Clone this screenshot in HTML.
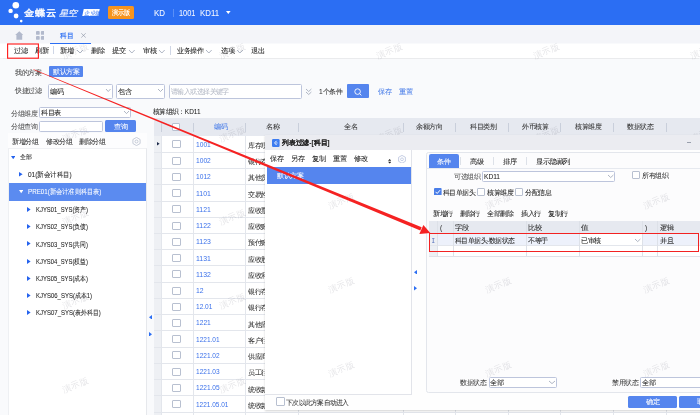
<!DOCTYPE html>
<html><head><meta charset="utf-8"><style>
html,body{margin:0;padding:0;width:700px;height:415px;overflow:hidden;background:#f8f9fb}
.t{-webkit-text-stroke:0.1px currentColor}
#root{position:absolute;left:0;top:0;width:700px;height:415px;overflow:hidden;will-change:transform}
body{position:relative;font-family:"Liberation Sans",sans-serif}
.r{position:absolute}
.t{position:absolute;white-space:nowrap}
</style></head><body><div id="root">
<div class="r" style="left:0.00px;top:0.00px;width:700.00px;height:415.00px;background:#f9fafc"></div>
<div class="r" style="left:0.00px;top:0.00px;width:700.00px;height:24.80px;background:#2b6ef3"></div>
<svg class="r" style="left:0;top:0" width="30" height="24"><circle cx="15.8" cy="5.2" r="3.3" fill="#fff"/><circle cx="10.6" cy="10.9" r="2.2" fill="#fff"/><circle cx="16.1" cy="16" r="2.4" fill="#fff"/><circle cx="21.2" cy="21.1" r="1.3" fill="#fff"/></svg>
<span id="t1" class="t" style="left:23.67px;top:6.51px;font-size:11px;line-height:11px;color:#fff;font-weight:normal;transform:scaleY(0.86);transform-origin:0 60%;-webkit-text-stroke:0.45px #fff">金蝶云</span>
<span id="t2" class="t" style="left:59.21px;top:7.50px;font-size:9.6px;line-height:9.6px;color:#eef3ff;font-weight:normal;transform:skewX(-12deg) scaleY(0.85);transform-origin:0 60%;-webkit-text-stroke:0.2px #eef3ff;letter-spacing:-0.4px">星空</span>
<div class="r" style="left:82.5px;top:9.2px;width:16px;height:6.8px;background:#fff;transform:skewX(-12deg)"></div>
<span class="t" style="left:84.2px;top:9.6px;font-size:11px;line-height:12px;color:#2b6ef3;font-style:italic;transform:scale(0.5);transform-origin:0 0;-webkit-text-stroke:0">企业版</span>
<div class="r" style="left:107.80px;top:6.30px;width:26.50px;height:12.30px;background:#f7941e;border-radius:1.5px"></div>
<span id="t3" class="t" style="left:111.79px;top:8.97px;font-size:14px;line-height:14px;color:#fff;font-weight:normal;transform:scale(0.4364,0.5);transform-origin:0 0;-webkit-text-stroke:0.25px #fff">演示版</span>
<span id="t4" class="t" style="left:154.45px;top:8.83px;font-size:16.6px;line-height:16.6px;color:#f4f7ff;font-weight:normal;transform:scale(0.4790,0.5);transform-origin:0 0;">KD</span>
<div class="r" style="left:173.30px;top:9.30px;width:0.80px;height:7.70px;background:#5a8ff7"></div>
<span id="t5" class="t" style="left:179.05px;top:8.83px;font-size:16.6px;line-height:16.6px;color:#f4f7ff;font-weight:normal;transform:scale(0.4455,0.5);transform-origin:0 0;">1001</span>
<span id="t6" class="t" style="left:199.75px;top:8.83px;font-size:16.6px;line-height:16.6px;color:#f4f7ff;font-weight:normal;transform:scale(0.4729,0.5);transform-origin:0 0;">KD11</span>
<svg class="r" style="left:226.2px;top:11.4px" width="5" height="3.2"><polygon points="0,0 4.6,0 2.3,3" fill="#fff"/></svg>
<div class="r" style="left:0.00px;top:24.80px;width:700.00px;height:18.70px;background:#f4f5f9"></div>
<svg class="r" style="left:14.8px;top:31.3px" width="8.6" height="8.8"><polygon points="4.3,0.2 8.4,4.0 7.2,4.0 7.2,8.8 1.4,8.8 1.4,4.0 0.2,4.0" fill="#b2b9cc"/></svg>
<svg class="r" style="left:35.7px;top:31.2px" width="8.6" height="8.8"><rect x="0" y="0" width="3.7" height="3.8" rx="0.9" fill="#b2b9cc"/><rect x="4.9" y="0" width="3.7" height="3.8" rx="0.9" fill="#b2b9cc"/><rect x="0" y="5.0" width="3.7" height="3.8" rx="0.9" fill="#b2b9cc"/><rect x="4.9" y="5.0" width="3.7" height="3.8" rx="0.9" fill="#b2b9cc"/></svg>
<span id="t7" class="t" style="left:60.08px;top:31.97px;font-size:14.4px;line-height:14.4px;color:#2b6ef3;font-weight:normal;transform:scale(0.4874,0.5);transform-origin:0 0;-webkit-text-stroke:0.3px #2b6ef3">科目</span>
<svg class="r" style="left:81px;top:33.3px" width="5" height="4.8"><path d="M0.3,0.3 L4.7,4.5 M4.7,0.3 L0.3,4.5" stroke="#858d9f" stroke-width="0.6"/></svg>
<div class="r" style="left:50.00px;top:42.60px;width:40.70px;height:1.40px;background:#2b6ef3"></div>
<div class="r" style="left:0.00px;top:44.00px;width:700.00px;height:13.50px;background:#fff;box-shadow:0 0.6px 1px rgba(0,0,0,0.06)"></div>
<span id="t8" class="t" style="left:14.10px;top:47.17px;font-size:13.2px;line-height:13.2px;color:#222;font-weight:normal;transform:scale(0.5152,0.5);transform-origin:0 0;">过滤</span>
<span id="t9" class="t" style="left:35.20px;top:47.17px;font-size:13.2px;line-height:13.2px;color:#222;font-weight:normal;transform:scale(0.5152,0.5);transform-origin:0 0;">刷新</span>
<div class="r" style="left:53.30px;top:46.30px;width:0.70px;height:7.70px;background:#cfd6e6"></div>
<span id="t10" class="t" style="left:59.80px;top:47.17px;font-size:13.2px;line-height:13.2px;color:#222;font-weight:normal;transform:scale(0.5152,0.5);transform-origin:0 0;">新增</span>
<svg class="r" style="left:77.00px;top:49.50px;overflow:visible" width="6.00" height="3.00"><polyline points="0,0 3.00,3.00 6.00,0" fill="none" stroke="#9aa3b5" stroke-width="0.8"/></svg>
<span id="t11" class="t" style="left:90.90px;top:47.17px;font-size:13.2px;line-height:13.2px;color:#222;font-weight:normal;transform:scale(0.5152,0.5);transform-origin:0 0;">删除</span>
<span id="t12" class="t" style="left:111.50px;top:47.17px;font-size:13.2px;line-height:13.2px;color:#222;font-weight:normal;transform:scale(0.5152,0.5);transform-origin:0 0;">提交</span>
<svg class="r" style="left:128.60px;top:49.50px;overflow:visible" width="5.70" height="3.00"><polyline points="0,0 2.85,3.00 5.70,0" fill="none" stroke="#9aa3b5" stroke-width="0.8"/></svg>
<span id="t13" class="t" style="left:142.70px;top:47.17px;font-size:13.2px;line-height:13.2px;color:#222;font-weight:normal;transform:scale(0.5152,0.5);transform-origin:0 0;">审核</span>
<svg class="r" style="left:159.30px;top:49.50px;overflow:visible" width="5.70" height="3.00"><polyline points="0,0 2.85,3.00 5.70,0" fill="none" stroke="#9aa3b5" stroke-width="0.8"/></svg>
<div class="r" style="left:170.00px;top:46.40px;width:0.70px;height:8.60px;background:#cfd6e6"></div>
<span id="t14" class="t" style="left:176.90px;top:47.17px;font-size:13.2px;line-height:13.2px;color:#222;font-weight:normal;transform:scale(0.5018,0.5);transform-origin:0 0;">业务操作</span>
<svg class="r" style="left:206.40px;top:49.50px;overflow:visible" width="5.70" height="3.00"><polyline points="0,0 2.85,3.00 5.70,0" fill="none" stroke="#9aa3b5" stroke-width="0.8"/></svg>
<span id="t15" class="t" style="left:220.50px;top:47.17px;font-size:13.2px;line-height:13.2px;color:#222;font-weight:normal;transform:scale(0.5152,0.5);transform-origin:0 0;">选项</span>
<svg class="r" style="left:237.00px;top:49.50px;overflow:visible" width="5.90" height="3.00"><polyline points="0,0 2.95,3.00 5.90,0" fill="none" stroke="#9aa3b5" stroke-width="0.8"/></svg>
<span id="t16" class="t" style="left:251.20px;top:47.17px;font-size:13.2px;line-height:13.2px;color:#222;font-weight:normal;transform:scale(0.5152,0.5);transform-origin:0 0;">退出</span>
<span id="t17" class="t" style="left:14.80px;top:68.87px;font-size:13.2px;line-height:13.2px;color:#444;font-weight:normal;transform:scale(0.5018,0.5);transform-origin:0 0;">我的方案</span>
<div class="r" style="left:49.30px;top:66.00px;width:33.60px;height:11.10px;background:#5585ee;border-radius:1px"></div>
<span id="t18" class="t" style="left:52.80px;top:68.27px;font-size:13.2px;line-height:13.2px;color:#fff;font-weight:normal;transform:scale(0.5018,0.5);transform-origin:0 0;">默认方案</span>
<span id="t19" class="t" style="left:14.80px;top:87.47px;font-size:13.2px;line-height:13.2px;color:#444;font-weight:normal;transform:scale(0.5018,0.5);transform-origin:0 0;">快捷过滤</span>
<div class="r" style="left:48.30px;top:84.30px;width:64.30px;height:14.40px;background:#fff;border:0.8px solid #bdc5dc;border-radius:1.5px;box-sizing:border-box"></div>
<span id="t20" class="t" style="left:50.30px;top:87.87px;font-size:13.2px;line-height:13.2px;color:#222;font-weight:normal;transform:scale(0.5152,0.5);transform-origin:0 0;">编码</span>
<svg class="r" style="left:105.70px;top:89.40px;overflow:visible" width="4.50" height="2.50"><polyline points="0,0 2.25,2.50 4.50,0" fill="none" stroke="#9aa3b5" stroke-width="0.8"/></svg>
<div class="r" style="left:116.40px;top:84.30px;width:48.60px;height:14.40px;background:#fff;border:0.8px solid #bdc5dc;border-radius:1.5px;box-sizing:border-box"></div>
<span id="t21" class="t" style="left:118.30px;top:87.87px;font-size:13.2px;line-height:13.2px;color:#222;font-weight:normal;transform:scale(0.5152,0.5);transform-origin:0 0;">包含</span>
<svg class="r" style="left:157.90px;top:89.40px;overflow:visible" width="5.00" height="2.50"><polyline points="0,0 2.50,2.50 5.00,0" fill="none" stroke="#9aa3b5" stroke-width="0.8"/></svg>
<div class="r" style="left:169.30px;top:84.00px;width:132.70px;height:14.70px;background:#fff;border:0.8px solid #bdc5dc;border-radius:1.5px;box-sizing:border-box"></div>
<span id="t22" class="t" style="left:171.31px;top:87.92px;font-size:13.0px;line-height:13.0px;color:#b5bac6;font-weight:normal;transform:scale(0.4943,0.5);transform-origin:0 0;">请输入或选择关键字</span>
<svg class="r" style="left:305.60px;top:89.00px;overflow:visible" width="5.40" height="2.50"><polyline points="0,0 2.70,2.50 5.40,0" fill="none" stroke="#9aa3b5" stroke-width="0.8"/></svg>
<svg class="r" style="left:305.60px;top:91.50px;overflow:visible" width="5.40" height="2.50"><polyline points="0,0 2.70,2.50 5.40,0" fill="none" stroke="#9aa3b5" stroke-width="0.8"/></svg>
<span id="t23" class="t" style="left:318.80px;top:88.17px;font-size:13.2px;line-height:13.2px;color:#333;font-weight:normal;transform:scale(0.5005,0.5);transform-origin:0 0;">1个条件</span>
<div class="r" style="left:347.00px;top:84.30px;width:22.00px;height:14.00px;background:#5585ee;border-radius:1px"></div>
<svg class="r" style="left:353.5px;top:87.6px" width="8" height="8"><circle cx="3.6" cy="3.6" r="2.8" fill="none" stroke="#fff" stroke-width="0.9"/><line x1="5.6" y1="5.6" x2="7.4" y2="7.4" stroke="#fff" stroke-width="0.9"/></svg>
<span id="t24" class="t" style="left:377.80px;top:88.17px;font-size:13.2px;line-height:13.2px;color:#4a7ee8;font-weight:normal;transform:scale(0.5152,0.5);transform-origin:0 0;">保存</span>
<span id="t25" class="t" style="left:398.80px;top:88.17px;font-size:13.2px;line-height:13.2px;color:#4a7ee8;font-weight:normal;transform:scale(0.5152,0.5);transform-origin:0 0;">重置</span>
<span id="t26" class="t" style="left:11.20px;top:109.67px;font-size:13.2px;line-height:13.2px;color:#555;font-weight:normal;transform:scale(0.5018,0.5);transform-origin:0 0;">分组维度</span>
<div class="r" style="left:39.20px;top:107.20px;width:91.50px;height:10.40px;background:#fff;border:0.8px solid #bdc5dc;border-radius:1.5px;box-sizing:border-box"></div>
<span id="t27" class="t" style="left:40.80px;top:109.17px;font-size:13.2px;line-height:13.2px;color:#222;font-weight:normal;transform:scale(0.5063,0.5);transform-origin:0 0;">科目表</span>
<svg class="r" style="left:124.00px;top:111.00px;overflow:visible" width="5.00" height="2.60"><polyline points="0,0 2.50,2.60 5.00,0" fill="none" stroke="#9aa3b5" stroke-width="0.8"/></svg>
<span id="t28" class="t" style="left:11.20px;top:123.17px;font-size:13.2px;line-height:13.2px;color:#555;font-weight:normal;transform:scale(0.5018,0.5);transform-origin:0 0;">分组查询</span>
<div class="r" style="left:39.20px;top:121.20px;width:63.70px;height:10.90px;background:#fff;border:0.8px solid #bdc5dc;border-radius:1.5px;box-sizing:border-box"></div>
<div class="r" style="left:105.00px;top:120.30px;width:31.30px;height:11.50px;background:#5585ee;border-radius:1.5px"></div>
<span id="t29" class="t" style="left:114.10px;top:122.77px;font-size:13.2px;line-height:13.2px;color:#fff;font-weight:normal;transform:scale(0.5152,0.5);transform-origin:0 0;">查询</span>
<div class="r" style="left:8.00px;top:133.20px;width:138.90px;height:14.40px;background:#fdfdfe"></div>
<div class="r" style="left:8.00px;top:147.60px;width:138.90px;height:267.40px;background:#fff;border-right:0.8px solid #e6e8ec;border-left:0.8px solid #eef0f3;border-top:0.6px solid #f0f1f4;box-sizing:border-box"></div>
<span id="t30" class="t" style="left:11.70px;top:137.67px;font-size:13.2px;line-height:13.2px;color:#333;font-weight:normal;transform:scale(0.5018,0.5);transform-origin:0 0;">新增分组</span>
<span id="t31" class="t" style="left:45.60px;top:137.67px;font-size:13.2px;line-height:13.2px;color:#333;font-weight:normal;transform:scale(0.5018,0.5);transform-origin:0 0;">修改分组</span>
<span id="t32" class="t" style="left:79.20px;top:137.67px;font-size:13.2px;line-height:13.2px;color:#333;font-weight:normal;transform:scale(0.5018,0.5);transform-origin:0 0;">删除分组</span>
<svg class="r" style="left:131.8px;top:136.7px" width="9" height="9"><polygon points="4.5,0.4 8.1,2.5 8.1,6.5 4.5,8.6 0.9,6.5 0.9,2.5" fill="none" stroke="#b0b8c8" stroke-width="0.7"/><circle cx="4.5" cy="4.5" r="1.5" fill="none" stroke="#b0b8c8" stroke-width="0.7"/></svg>
<svg class="r" style="left:11.10px;top:155.70px" width="4.4" height="3.2"><polygon points="0,0 4.4,0 2.2,3.2" fill="#2563ee"/></svg>
<span id="t33" class="t" style="left:19.81px;top:154.36px;font-size:12.8px;line-height:12.8px;color:#111;font-weight:normal;transform:scale(0.4991,0.5);transform-origin:0 0;">全部</span>
<svg class="r" style="left:19.20px;top:172.20px" width="3.6" height="4.6"><polygon points="0,0 3.6,2.3 0,4.6" fill="#2563ee"/></svg>
<span id="t34" class="t" style="left:27.59px;top:171.02px;font-size:14.2px;line-height:14.2px;color:#1a1a1a;font-weight:normal;transform:scale(0.4593,0.5);transform-origin:0 0;">01(新会计科目)</span>
<div class="r" style="left:9.00px;top:183.20px;width:136.60px;height:17.60px;background:#5b8bf0"></div>
<svg class="r" style="left:19.00px;top:190.40px" width="4.4" height="3.2"><polygon points="0,0 4.4,0 2.2,3.2" fill="#fff"/></svg>
<span id="t35" class="t" style="left:27.59px;top:188.42px;font-size:14.2px;line-height:14.2px;color:#fff;font-weight:normal;transform:scale(0.4413,0.5);transform-origin:0 0;">PRE01(新会计准则科目表)</span>
<svg class="r" style="left:27.00px;top:206.90px" width="3.6" height="5.0"><polygon points="0,0 3.6,2.5 0,5.0" fill="#2563ee"/></svg>
<span id="t36" class="t" style="left:35.79px;top:206.22px;font-size:14.2px;line-height:14.2px;color:#1a1a1a;font-weight:normal;transform:scale(0.4163,0.5);transform-origin:0 0;">KJYS01_SYS(资产)</span>
<svg class="r" style="left:27.00px;top:224.10px" width="3.6" height="5.0"><polygon points="0,0 3.6,2.5 0,5.0" fill="#2563ee"/></svg>
<span id="t37" class="t" style="left:35.79px;top:223.42px;font-size:14.2px;line-height:14.2px;color:#1a1a1a;font-weight:normal;transform:scale(0.4163,0.5);transform-origin:0 0;">KJYS02_SYS(负债)</span>
<svg class="r" style="left:27.00px;top:241.30px" width="3.6" height="5.0"><polygon points="0,0 3.6,2.5 0,5.0" fill="#2563ee"/></svg>
<span id="t38" class="t" style="left:35.79px;top:240.62px;font-size:14.2px;line-height:14.2px;color:#1a1a1a;font-weight:normal;transform:scale(0.4163,0.5);transform-origin:0 0;">KJYS03_SYS(共同)</span>
<svg class="r" style="left:27.00px;top:258.50px" width="3.6" height="5.0"><polygon points="0,0 3.6,2.5 0,5.0" fill="#2563ee"/></svg>
<span id="t39" class="t" style="left:35.79px;top:257.82px;font-size:14.2px;line-height:14.2px;color:#1a1a1a;font-weight:normal;transform:scale(0.4163,0.5);transform-origin:0 0;">KJYS04_SYS(权益)</span>
<svg class="r" style="left:27.00px;top:275.70px" width="3.6" height="5.0"><polygon points="0,0 3.6,2.5 0,5.0" fill="#2563ee"/></svg>
<span id="t40" class="t" style="left:35.79px;top:275.02px;font-size:14.2px;line-height:14.2px;color:#1a1a1a;font-weight:normal;transform:scale(0.4163,0.5);transform-origin:0 0;">KJYS05_SYS(成本)</span>
<svg class="r" style="left:27.00px;top:292.90px" width="3.6" height="5.0"><polygon points="0,0 3.6,2.5 0,5.0" fill="#2563ee"/></svg>
<span id="t41" class="t" style="left:35.79px;top:292.22px;font-size:14.2px;line-height:14.2px;color:#1a1a1a;font-weight:normal;transform:scale(0.4217,0.5);transform-origin:0 0;">KJYS06_SYS(成本1)</span>
<svg class="r" style="left:27.00px;top:310.10px" width="3.6" height="5.0"><polygon points="0,0 3.6,2.5 0,5.0" fill="#2563ee"/></svg>
<span id="t42" class="t" style="left:35.79px;top:309.42px;font-size:14.2px;line-height:14.2px;color:#1a1a1a;font-weight:normal;transform:scale(0.4231,0.5);transform-origin:0 0;">KJYS07_SYS(表外科目)</span>
<svg class="r" style="left:148.50px;top:314.80px" width="3" height="4.6"><polygon points="3,0 0,2.3 3,4.6" fill="#2b6ef3"/></svg>
<svg class="r" style="left:148.70px;top:331.60px" width="3" height="4.6"><polygon points="0,0 3,2.3 0,4.6" fill="#2b6ef3"/></svg>
<span id="t43" class="t" style="left:153.20px;top:107.67px;font-size:13.2px;line-height:13.2px;color:#222;font-weight:normal;transform:scale(0.4896,0.5);transform-origin:0 0;">核算组织：KD11</span>
<div class="r" style="left:153.60px;top:118.00px;width:546.40px;height:17.90px;background:#e6e9f0"></div>
<div class="r" style="left:161.15px;top:123.30px;width:0.70px;height:8.90px;background:#c9cfdb"></div>
<div class="r" style="left:193.25px;top:123.30px;width:0.70px;height:8.90px;background:#c9cfdb"></div>
<div class="r" style="left:245.05px;top:123.30px;width:0.70px;height:8.90px;background:#c9cfdb"></div>
<div class="r" style="left:298.25px;top:123.30px;width:0.70px;height:8.90px;background:#c9cfdb"></div>
<div class="r" style="left:403.15px;top:123.30px;width:0.70px;height:8.90px;background:#c9cfdb"></div>
<div class="r" style="left:455.35px;top:123.30px;width:0.70px;height:8.90px;background:#c9cfdb"></div>
<div class="r" style="left:508.15px;top:123.30px;width:0.70px;height:8.90px;background:#c9cfdb"></div>
<div class="r" style="left:560.25px;top:123.30px;width:0.70px;height:8.90px;background:#c9cfdb"></div>
<div class="r" style="left:613.35px;top:123.30px;width:0.70px;height:8.90px;background:#c9cfdb"></div>
<div class="r" style="left:666.25px;top:123.30px;width:0.70px;height:8.90px;background:#c9cfdb"></div>
<div class="r" style="left:171.50px;top:123.20px;width:6.20px;height:6.20px;border:0.8px solid #b8c0d0;border-radius:1px;background:#fff"></div>
<span id="t44" class="t" style="left:213.60px;top:123.37px;font-size:13.2px;line-height:13.2px;color:#4a7ee8;font-weight:normal;transform:scale(0.5152,0.5);transform-origin:0 0;">编码</span>
<span id="t45" class="t" style="left:265.80px;top:123.37px;font-size:13.2px;line-height:13.2px;color:#333;font-weight:normal;transform:scale(0.5152,0.5);transform-origin:0 0;">名称</span>
<span id="t46" class="t" style="left:344.40px;top:123.37px;font-size:13.2px;line-height:13.2px;color:#333;font-weight:normal;transform:scale(0.5152,0.5);transform-origin:0 0;">全名</span>
<span id="t47" class="t" style="left:416.40px;top:123.37px;font-size:13.2px;line-height:13.2px;color:#333;font-weight:normal;transform:scale(0.5018,0.5);transform-origin:0 0;">余额方向</span>
<span id="t48" class="t" style="left:469.60px;top:123.37px;font-size:13.2px;line-height:13.2px;color:#333;font-weight:normal;transform:scale(0.5018,0.5);transform-origin:0 0;">科目类别</span>
<span id="t49" class="t" style="left:522.10px;top:123.37px;font-size:13.2px;line-height:13.2px;color:#333;font-weight:normal;transform:scale(0.5018,0.5);transform-origin:0 0;">外币核算</span>
<span id="t50" class="t" style="left:574.70px;top:123.37px;font-size:13.2px;line-height:13.2px;color:#333;font-weight:normal;transform:scale(0.5018,0.5);transform-origin:0 0;">核算维度</span>
<span id="t51" class="t" style="left:626.90px;top:123.37px;font-size:13.2px;line-height:13.2px;color:#333;font-weight:normal;transform:scale(0.5018,0.5);transform-origin:0 0;">数据状态</span>
<div class="r" style="left:153.60px;top:135.90px;width:7.90px;height:279.10px;background:#eef0f4"></div>
<div class="r" style="left:161.50px;top:135.90px;width:538.50px;height:279.10px;background:#fff"></div>
<div class="r" style="left:153.60px;top:151.78px;width:546.40px;height:0.80px;background:#e3e6ec"></div>
<div class="r" style="left:172.30px;top:140.36px;width:6.80px;height:6.00px;border:0.8px solid #b8c0d0;border-radius:1px;background:#fff"></div>
<span id="t52" class="t" style="left:195.56px;top:139.84px;font-size:16px;line-height:16px;color:#3a70ea;font-weight:normal;transform:scale(0.4164,0.5);transform-origin:0 0;-webkit-text-stroke:0">1001</span>
<span id="t53" class="t" style="left:247.80px;top:141.93px;font-size:13.2px;line-height:13.2px;color:#333;font-weight:normal;transform:scale(0.5018,0.5);transform-origin:0 0;">库存现金</span>
<div class="r" style="left:153.60px;top:168.02px;width:546.40px;height:0.80px;background:#e3e6ec"></div>
<div class="r" style="left:172.30px;top:156.60px;width:6.80px;height:6.00px;border:0.8px solid #b8c0d0;border-radius:1px;background:#fff"></div>
<span id="t54" class="t" style="left:195.56px;top:156.08px;font-size:16px;line-height:16px;color:#3a70ea;font-weight:normal;transform:scale(0.4164,0.5);transform-origin:0 0;-webkit-text-stroke:0">1002</span>
<span id="t55" class="t" style="left:247.80px;top:158.17px;font-size:13.2px;line-height:13.2px;color:#333;font-weight:normal;transform:scale(0.5018,0.5);transform-origin:0 0;">银行存款</span>
<div class="r" style="left:153.60px;top:184.26px;width:546.40px;height:0.80px;background:#e3e6ec"></div>
<div class="r" style="left:172.30px;top:172.84px;width:6.80px;height:6.00px;border:0.8px solid #b8c0d0;border-radius:1px;background:#fff"></div>
<span id="t56" class="t" style="left:195.56px;top:172.32px;font-size:16px;line-height:16px;color:#3a70ea;font-weight:normal;transform:scale(0.4164,0.5);transform-origin:0 0;-webkit-text-stroke:0">1012</span>
<span id="t57" class="t" style="left:247.80px;top:174.41px;font-size:13.2px;line-height:13.2px;color:#333;font-weight:normal;transform:scale(0.5018,0.5);transform-origin:0 0;">其他货币</span>
<div class="r" style="left:153.60px;top:200.50px;width:546.40px;height:0.80px;background:#e3e6ec"></div>
<div class="r" style="left:172.30px;top:189.08px;width:6.80px;height:6.00px;border:0.8px solid #b8c0d0;border-radius:1px;background:#fff"></div>
<span id="t58" class="t" style="left:195.56px;top:188.56px;font-size:16px;line-height:16px;color:#3a70ea;font-weight:normal;transform:scale(0.4307,0.5);transform-origin:0 0;-webkit-text-stroke:0">1101</span>
<span id="t59" class="t" style="left:247.80px;top:190.65px;font-size:13.2px;line-height:13.2px;color:#333;font-weight:normal;transform:scale(0.5018,0.5);transform-origin:0 0;">交易性金</span>
<div class="r" style="left:153.60px;top:216.74px;width:546.40px;height:0.80px;background:#e3e6ec"></div>
<div class="r" style="left:172.30px;top:205.32px;width:6.80px;height:6.00px;border:0.8px solid #b8c0d0;border-radius:1px;background:#fff"></div>
<span id="t60" class="t" style="left:195.56px;top:204.80px;font-size:16px;line-height:16px;color:#3a70ea;font-weight:normal;transform:scale(0.4307,0.5);transform-origin:0 0;-webkit-text-stroke:0">1121</span>
<span id="t61" class="t" style="left:247.80px;top:206.89px;font-size:13.2px;line-height:13.2px;color:#333;font-weight:normal;transform:scale(0.5018,0.5);transform-origin:0 0;">应收票据</span>
<div class="r" style="left:153.60px;top:232.98px;width:546.40px;height:0.80px;background:#e3e6ec"></div>
<div class="r" style="left:172.30px;top:221.56px;width:6.80px;height:6.00px;border:0.8px solid #b8c0d0;border-radius:1px;background:#fff"></div>
<span id="t62" class="t" style="left:195.56px;top:221.04px;font-size:16px;line-height:16px;color:#3a70ea;font-weight:normal;transform:scale(0.4307,0.5);transform-origin:0 0;-webkit-text-stroke:0">1122</span>
<span id="t63" class="t" style="left:247.80px;top:223.13px;font-size:13.2px;line-height:13.2px;color:#333;font-weight:normal;transform:scale(0.5018,0.5);transform-origin:0 0;">应收账款</span>
<div class="r" style="left:153.60px;top:249.22px;width:546.40px;height:0.80px;background:#e3e6ec"></div>
<div class="r" style="left:172.30px;top:237.80px;width:6.80px;height:6.00px;border:0.8px solid #b8c0d0;border-radius:1px;background:#fff"></div>
<span id="t64" class="t" style="left:195.56px;top:237.28px;font-size:16px;line-height:16px;color:#3a70ea;font-weight:normal;transform:scale(0.4307,0.5);transform-origin:0 0;-webkit-text-stroke:0">1123</span>
<span id="t65" class="t" style="left:247.80px;top:239.37px;font-size:13.2px;line-height:13.2px;color:#333;font-weight:normal;transform:scale(0.5018,0.5);transform-origin:0 0;">预付账款</span>
<div class="r" style="left:153.60px;top:265.46px;width:546.40px;height:0.80px;background:#e3e6ec"></div>
<div class="r" style="left:172.30px;top:254.04px;width:6.80px;height:6.00px;border:0.8px solid #b8c0d0;border-radius:1px;background:#fff"></div>
<span id="t66" class="t" style="left:195.56px;top:253.52px;font-size:16px;line-height:16px;color:#3a70ea;font-weight:normal;transform:scale(0.4307,0.5);transform-origin:0 0;-webkit-text-stroke:0">1131</span>
<span id="t67" class="t" style="left:247.80px;top:255.61px;font-size:13.2px;line-height:13.2px;color:#333;font-weight:normal;transform:scale(0.5018,0.5);transform-origin:0 0;">应收股利</span>
<div class="r" style="left:153.60px;top:281.70px;width:546.40px;height:0.80px;background:#e3e6ec"></div>
<div class="r" style="left:172.30px;top:270.28px;width:6.80px;height:6.00px;border:0.8px solid #b8c0d0;border-radius:1px;background:#fff"></div>
<span id="t68" class="t" style="left:195.56px;top:269.76px;font-size:16px;line-height:16px;color:#3a70ea;font-weight:normal;transform:scale(0.4307,0.5);transform-origin:0 0;-webkit-text-stroke:0">1132</span>
<span id="t69" class="t" style="left:247.80px;top:271.85px;font-size:13.2px;line-height:13.2px;color:#333;font-weight:normal;transform:scale(0.5018,0.5);transform-origin:0 0;">应收利息</span>
<div class="r" style="left:153.60px;top:297.94px;width:546.40px;height:0.80px;background:#e3e6ec"></div>
<div class="r" style="left:172.30px;top:286.52px;width:6.80px;height:6.00px;border:0.8px solid #b8c0d0;border-radius:1px;background:#fff"></div>
<span id="t70" class="t" style="left:195.56px;top:286.00px;font-size:16px;line-height:16px;color:#3a70ea;font-weight:normal;transform:scale(0.4282,0.5);transform-origin:0 0;-webkit-text-stroke:0">12</span>
<span id="t71" class="t" style="left:247.80px;top:288.09px;font-size:13.2px;line-height:13.2px;color:#333;font-weight:normal;transform:scale(0.5018,0.5);transform-origin:0 0;">银行存款</span>
<div class="r" style="left:153.60px;top:314.18px;width:546.40px;height:0.80px;background:#e3e6ec"></div>
<div class="r" style="left:172.30px;top:302.76px;width:6.80px;height:6.00px;border:0.8px solid #b8c0d0;border-radius:1px;background:#fff"></div>
<span id="t72" class="t" style="left:195.56px;top:302.24px;font-size:16px;line-height:16px;color:#3a70ea;font-weight:normal;transform:scale(0.4100,0.5);transform-origin:0 0;-webkit-text-stroke:0">12.01</span>
<span id="t73" class="t" style="left:247.80px;top:304.33px;font-size:13.2px;line-height:13.2px;color:#333;font-weight:normal;transform:scale(0.5018,0.5);transform-origin:0 0;">银行存款</span>
<div class="r" style="left:153.60px;top:330.42px;width:546.40px;height:0.80px;background:#e3e6ec"></div>
<div class="r" style="left:172.30px;top:319.00px;width:6.80px;height:6.00px;border:0.8px solid #b8c0d0;border-radius:1px;background:#fff"></div>
<span id="t74" class="t" style="left:195.56px;top:318.48px;font-size:16px;line-height:16px;color:#3a70ea;font-weight:normal;transform:scale(0.4164,0.5);transform-origin:0 0;-webkit-text-stroke:0">1221</span>
<span id="t75" class="t" style="left:247.80px;top:320.57px;font-size:13.2px;line-height:13.2px;color:#333;font-weight:normal;transform:scale(0.5018,0.5);transform-origin:0 0;">其他应收</span>
<div class="r" style="left:153.60px;top:346.66px;width:546.40px;height:0.80px;background:#e3e6ec"></div>
<div class="r" style="left:172.30px;top:335.24px;width:6.80px;height:6.00px;border:0.8px solid #b8c0d0;border-radius:1px;background:#fff"></div>
<span id="t76" class="t" style="left:195.56px;top:334.72px;font-size:16px;line-height:16px;color:#3a70ea;font-weight:normal;transform:scale(0.4083,0.5);transform-origin:0 0;-webkit-text-stroke:0">1221.01</span>
<span id="t77" class="t" style="left:247.80px;top:336.81px;font-size:13.2px;line-height:13.2px;color:#333;font-weight:normal;transform:scale(0.5018,0.5);transform-origin:0 0;">客户往来</span>
<div class="r" style="left:153.60px;top:362.90px;width:546.40px;height:0.80px;background:#e3e6ec"></div>
<div class="r" style="left:172.30px;top:351.48px;width:6.80px;height:6.00px;border:0.8px solid #b8c0d0;border-radius:1px;background:#fff"></div>
<span id="t78" class="t" style="left:195.56px;top:350.96px;font-size:16px;line-height:16px;color:#3a70ea;font-weight:normal;transform:scale(0.4083,0.5);transform-origin:0 0;-webkit-text-stroke:0">1221.02</span>
<span id="t79" class="t" style="left:247.80px;top:353.05px;font-size:13.2px;line-height:13.2px;color:#333;font-weight:normal;transform:scale(0.5018,0.5);transform-origin:0 0;">供应商往</span>
<div class="r" style="left:153.60px;top:379.14px;width:546.40px;height:0.80px;background:#e3e6ec"></div>
<div class="r" style="left:172.30px;top:367.72px;width:6.80px;height:6.00px;border:0.8px solid #b8c0d0;border-radius:1px;background:#fff"></div>
<span id="t80" class="t" style="left:195.56px;top:367.20px;font-size:16px;line-height:16px;color:#3a70ea;font-weight:normal;transform:scale(0.4083,0.5);transform-origin:0 0;-webkit-text-stroke:0">1221.03</span>
<span id="t81" class="t" style="left:247.80px;top:369.29px;font-size:13.2px;line-height:13.2px;color:#333;font-weight:normal;transform:scale(0.5018,0.5);transform-origin:0 0;">员工往来</span>
<div class="r" style="left:153.60px;top:395.38px;width:546.40px;height:0.80px;background:#e3e6ec"></div>
<div class="r" style="left:172.30px;top:383.96px;width:6.80px;height:6.00px;border:0.8px solid #b8c0d0;border-radius:1px;background:#fff"></div>
<span id="t82" class="t" style="left:195.56px;top:383.44px;font-size:16px;line-height:16px;color:#3a70ea;font-weight:normal;transform:scale(0.4083,0.5);transform-origin:0 0;-webkit-text-stroke:0">1221.05</span>
<span id="t83" class="t" style="left:247.80px;top:385.53px;font-size:13.2px;line-height:13.2px;color:#333;font-weight:normal;transform:scale(0.5063,0.5);transform-origin:0 0;">统收款</span>
<div class="r" style="left:153.60px;top:411.62px;width:546.40px;height:0.80px;background:#e3e6ec"></div>
<div class="r" style="left:172.30px;top:400.20px;width:6.80px;height:6.00px;border:0.8px solid #b8c0d0;border-radius:1px;background:#fff"></div>
<span id="t84" class="t" style="left:195.56px;top:399.68px;font-size:16px;line-height:16px;color:#3a70ea;font-weight:normal;transform:scale(0.4049,0.5);transform-origin:0 0;-webkit-text-stroke:0">1221.05.01</span>
<span id="t85" class="t" style="left:247.80px;top:401.77px;font-size:13.2px;line-height:13.2px;color:#333;font-weight:normal;transform:scale(0.5063,0.5);transform-origin:0 0;">统收款</span>
<div class="r" style="left:153.60px;top:427.86px;width:546.40px;height:0.80px;background:#e3e6ec"></div>
<div class="r" style="left:161.15px;top:135.90px;width:0.70px;height:279.10px;background:#e3e6ec"></div>
<div class="r" style="left:193.25px;top:135.90px;width:0.70px;height:279.10px;background:#e3e6ec"></div>
<div class="r" style="left:245.05px;top:135.90px;width:0.70px;height:279.10px;background:#e3e6ec"></div>
<div class="r" style="left:298.25px;top:135.90px;width:0.70px;height:279.10px;background:#e3e6ec"></div>
<div class="r" style="left:403.15px;top:135.90px;width:0.70px;height:279.10px;background:#e3e6ec"></div>
<div class="r" style="left:455.35px;top:135.90px;width:0.70px;height:279.10px;background:#e3e6ec"></div>
<div class="r" style="left:508.15px;top:135.90px;width:0.70px;height:279.10px;background:#e3e6ec"></div>
<div class="r" style="left:560.25px;top:135.90px;width:0.70px;height:279.10px;background:#e3e6ec"></div>
<div class="r" style="left:613.35px;top:135.90px;width:0.70px;height:279.10px;background:#e3e6ec"></div>
<div class="r" style="left:666.25px;top:135.90px;width:0.70px;height:279.10px;background:#e3e6ec"></div>
<svg class="r" style="left:156.5px;top:142.2px" width="3" height="4"><polygon points="0,0 2.6,1.8 0,3.6" fill="#1d2a4a"/></svg>
<span class="t" style="left:62.0px;top:46.0px;font-size:8.6px;line-height:10px;color:rgba(120,120,135,0.2);-webkit-text-stroke:0;transform:rotate(-22deg)">演示版</span>
<span class="t" style="left:219.0px;top:46.0px;font-size:8.6px;line-height:10px;color:rgba(120,120,135,0.2);-webkit-text-stroke:0;transform:rotate(-22deg)">演示版</span>
<span class="t" style="left:376.0px;top:46.0px;font-size:8.6px;line-height:10px;color:rgba(120,120,135,0.2);-webkit-text-stroke:0;transform:rotate(-22deg)">演示版</span>
<span class="t" style="left:533.0px;top:46.0px;font-size:8.6px;line-height:10px;color:rgba(120,120,135,0.2);-webkit-text-stroke:0;transform:rotate(-22deg)">演示版</span>
<span class="t" style="left:690.0px;top:46.0px;font-size:8.6px;line-height:10px;color:rgba(120,120,135,0.2);-webkit-text-stroke:0;transform:rotate(-22deg)">演示版</span>
<span class="t" style="left:62.0px;top:129.0px;font-size:8.6px;line-height:10px;color:rgba(120,120,135,0.2);-webkit-text-stroke:0;transform:rotate(-22deg)">演示版</span>
<span class="t" style="left:219.0px;top:129.0px;font-size:8.6px;line-height:10px;color:rgba(120,120,135,0.2);-webkit-text-stroke:0;transform:rotate(-22deg)">演示版</span>
<span class="t" style="left:376.0px;top:129.0px;font-size:8.6px;line-height:10px;color:rgba(120,120,135,0.2);-webkit-text-stroke:0;transform:rotate(-22deg)">演示版</span>
<span class="t" style="left:533.0px;top:129.0px;font-size:8.6px;line-height:10px;color:rgba(120,120,135,0.2);-webkit-text-stroke:0;transform:rotate(-22deg)">演示版</span>
<span class="t" style="left:690.0px;top:129.0px;font-size:8.6px;line-height:10px;color:rgba(120,120,135,0.2);-webkit-text-stroke:0;transform:rotate(-22deg)">演示版</span>
<span class="t" style="left:62.0px;top:212.3px;font-size:8.6px;line-height:10px;color:rgba(120,120,135,0.2);-webkit-text-stroke:0;transform:rotate(-22deg)">演示版</span>
<span class="t" style="left:219.0px;top:212.3px;font-size:8.6px;line-height:10px;color:rgba(120,120,135,0.2);-webkit-text-stroke:0;transform:rotate(-22deg)">演示版</span>
<span class="t" style="left:376.0px;top:212.3px;font-size:8.6px;line-height:10px;color:rgba(120,120,135,0.2);-webkit-text-stroke:0;transform:rotate(-22deg)">演示版</span>
<span class="t" style="left:533.0px;top:212.3px;font-size:8.6px;line-height:10px;color:rgba(120,120,135,0.2);-webkit-text-stroke:0;transform:rotate(-22deg)">演示版</span>
<span class="t" style="left:690.0px;top:212.3px;font-size:8.6px;line-height:10px;color:rgba(120,120,135,0.2);-webkit-text-stroke:0;transform:rotate(-22deg)">演示版</span>
<span class="t" style="left:62.0px;top:296.0px;font-size:8.6px;line-height:10px;color:rgba(120,120,135,0.2);-webkit-text-stroke:0;transform:rotate(-22deg)">演示版</span>
<span class="t" style="left:219.0px;top:296.0px;font-size:8.6px;line-height:10px;color:rgba(120,120,135,0.2);-webkit-text-stroke:0;transform:rotate(-22deg)">演示版</span>
<span class="t" style="left:376.0px;top:296.0px;font-size:8.6px;line-height:10px;color:rgba(120,120,135,0.2);-webkit-text-stroke:0;transform:rotate(-22deg)">演示版</span>
<span class="t" style="left:533.0px;top:296.0px;font-size:8.6px;line-height:10px;color:rgba(120,120,135,0.2);-webkit-text-stroke:0;transform:rotate(-22deg)">演示版</span>
<span class="t" style="left:690.0px;top:296.0px;font-size:8.6px;line-height:10px;color:rgba(120,120,135,0.2);-webkit-text-stroke:0;transform:rotate(-22deg)">演示版</span>
<span class="t" style="left:62.0px;top:379.7px;font-size:8.6px;line-height:10px;color:rgba(120,120,135,0.2);-webkit-text-stroke:0;transform:rotate(-22deg)">演示版</span>
<span class="t" style="left:219.0px;top:379.7px;font-size:8.6px;line-height:10px;color:rgba(120,120,135,0.2);-webkit-text-stroke:0;transform:rotate(-22deg)">演示版</span>
<span class="t" style="left:376.0px;top:379.7px;font-size:8.6px;line-height:10px;color:rgba(120,120,135,0.2);-webkit-text-stroke:0;transform:rotate(-22deg)">演示版</span>
<span class="t" style="left:533.0px;top:379.7px;font-size:8.6px;line-height:10px;color:rgba(120,120,135,0.2);-webkit-text-stroke:0;transform:rotate(-22deg)">演示版</span>
<span class="t" style="left:690.0px;top:379.7px;font-size:8.6px;line-height:10px;color:rgba(120,120,135,0.2);-webkit-text-stroke:0;transform:rotate(-22deg)">演示版</span>
<div class="r" style="left:265.00px;top:135.00px;width:440.00px;height:274.80px;background:#fefefe;box-shadow:0 0.5px 2px rgba(0,0,0,0.18)"></div>
<div class="r" style="left:265.00px;top:135.00px;width:435.00px;height:15.00px;background:#ebecf1"></div>
<svg class="r" style="left:272.3px;top:138.7px" width="7.6" height="7.9"><rect width="7.6" height="7.9" rx="1.2" fill="#3d7cf0"/><path d="M4.6,1.8 L2.6,3.95 L4.6,6.1" fill="none" stroke="#fff" stroke-width="1"/><circle cx="4.9" cy="3.95" r="0.6" fill="#fff"/></svg>
<span id="t86" class="t" style="left:282.19px;top:139.47px;font-size:14px;line-height:14px;color:#222;font-weight:bold;transform:scale(0.4860,0.5);transform-origin:0 0;">列表过滤-[科目]</span>
<div class="r" style="left:686.80px;top:141.80px;width:4.60px;height:0.60px;background:#9aa0ad"></div>
<div class="r" style="left:265.30px;top:150.00px;width:146.70px;height:244.80px;background:#fff;border-right:0.7px solid #e2e4ea;border-bottom:0.7px solid #e2e4ea;box-sizing:border-box"></div>
<span id="t87" class="t" style="left:270.20px;top:155.07px;font-size:13.2px;line-height:13.2px;color:#222;font-weight:normal;transform:scale(0.5152,0.5);transform-origin:0 0;">保存</span>
<span id="t88" class="t" style="left:291.30px;top:155.07px;font-size:13.2px;line-height:13.2px;color:#222;font-weight:normal;transform:scale(0.5152,0.5);transform-origin:0 0;">另存</span>
<span id="t89" class="t" style="left:311.80px;top:155.07px;font-size:13.2px;line-height:13.2px;color:#222;font-weight:normal;transform:scale(0.5152,0.5);transform-origin:0 0;">复制</span>
<span id="t90" class="t" style="left:332.80px;top:155.07px;font-size:13.2px;line-height:13.2px;color:#222;font-weight:normal;transform:scale(0.5152,0.5);transform-origin:0 0;">重置</span>
<span id="t91" class="t" style="left:353.80px;top:155.07px;font-size:13.2px;line-height:13.2px;color:#222;font-weight:normal;transform:scale(0.5152,0.5);transform-origin:0 0;">修改</span>
<svg class="r" style="left:387.8px;top:159.2px" width="3.4" height="4.6"><polygon points="0,1.8 3.4,1.8 1.7,0" fill="#222"/><polygon points="0,2.8 3.4,2.8 1.7,4.6" fill="#222"/></svg>
<svg class="r" style="left:397.5px;top:154.6px" width="8" height="8.6"><polygon points="4,0.4 7.4,2.3 7.4,6.3 4,8.2 0.6,6.3 0.6,2.3" fill="none" stroke="#b3bedb" stroke-width="0.75"/><circle cx="4" cy="4.3" r="1.4" fill="none" stroke="#b3bedb" stroke-width="0.7"/></svg>
<div class="r" style="left:267.20px;top:167.00px;width:143.80px;height:16.80px;background:#5585ee"></div>
<span id="t92" class="t" style="left:277.40px;top:172.07px;font-size:13.2px;line-height:13.2px;color:#fff;font-weight:normal;transform:scale(0.5018,0.5);transform-origin:0 0;">默认方案</span>
<svg class="r" style="left:414.00px;top:269.70px" width="3" height="4.6"><polygon points="3,0 0,2.3 3,4.6" fill="#2b6ef3"/></svg>
<svg class="r" style="left:414.30px;top:286.40px" width="3" height="4.6"><polygon points="0,0 3,2.3 0,4.6" fill="#2b6ef3"/></svg>
<div class="r" style="left:276.20px;top:397.00px;width:7.20px;height:7.20px;border:0.8px solid #b8c0d0;border-radius:1px;background:#fff"></div>
<span id="t93" class="t" style="left:286.41px;top:398.81px;font-size:13.0px;line-height:13.0px;color:#333;font-weight:normal;transform:scale(0.4814,0.5);transform-origin:0 0;">下次以此方案自动进入</span>
<div class="r" style="left:426.20px;top:151.80px;width:283.80px;height:241.60px;background:#fcfcfd;border:0.7px solid #e3e6ec;border-radius:2.5px;box-sizing:border-box"></div>
<div class="r" style="left:426.40px;top:167.80px;width:278.60px;height:0.60px;background:#e6e9ef"></div>
<div class="r" style="left:428.90px;top:153.90px;width:30.00px;height:13.90px;background:#5585ee;border-radius:2px 2px 0 0"></div>
<span id="t94" class="t" style="left:436.80px;top:158.37px;font-size:13.2px;line-height:13.2px;color:#fff;font-weight:normal;transform:scale(0.5152,0.5);transform-origin:0 0;">条件</span>
<div class="r" style="left:460.40px;top:157.00px;width:0.60px;height:8.00px;background:#dde1e8"></div>
<span id="t95" class="t" style="left:469.80px;top:158.47px;font-size:13.2px;line-height:13.2px;color:#222;font-weight:normal;transform:scale(0.5152,0.5);transform-origin:0 0;">高级</span>
<div class="r" style="left:493.30px;top:157.00px;width:0.60px;height:8.00px;background:#dde1e8"></div>
<span id="t96" class="t" style="left:503.40px;top:158.47px;font-size:13.2px;line-height:13.2px;color:#222;font-weight:normal;transform:scale(0.5152,0.5);transform-origin:0 0;">排序</span>
<div class="r" style="left:526.30px;top:157.00px;width:0.60px;height:8.00px;background:#dde1e8"></div>
<span id="t97" class="t" style="left:536.20px;top:158.47px;font-size:13.2px;line-height:13.2px;color:#222;font-weight:normal;transform:scale(0.5261,0.5);transform-origin:0 0;">显示隐藏列</span>
<span id="t98" class="t" style="left:454.10px;top:172.77px;font-size:13.2px;line-height:13.2px;color:#555;font-weight:normal;transform:scale(0.5018,0.5);transform-origin:0 0;">可选组织</span>
<div class="r" style="left:482.10px;top:170.70px;width:132.90px;height:10.90px;background:#fff;border:0.8px solid #bdc5dc;border-radius:1.5px;box-sizing:border-box"></div>
<span id="t99" class="t" style="left:483.60px;top:173.37px;font-size:13.2px;line-height:13.2px;color:#222;font-weight:normal;transform:scale(0.5000,0.5);transform-origin:0 0;">KD11</span>
<svg class="r" style="left:608.00px;top:174.80px;overflow:visible" width="5.40" height="2.50"><polyline points="0,0 2.70,2.50 5.40,0" fill="none" stroke="#9aa3b5" stroke-width="0.8"/></svg>
<div class="r" style="left:632.20px;top:171.20px;width:6.20px;height:6.20px;border:0.8px solid #b8c0d0;border-radius:1px;background:#fff"></div>
<span id="t100" class="t" style="left:641.80px;top:171.67px;font-size:13.2px;line-height:13.2px;color:#333;font-weight:normal;transform:scale(0.5018,0.5);transform-origin:0 0;">所有组织</span>
<svg class="r" style="left:434.00px;top:187.90px" width="7.6" height="7.6"><rect x="0" y="0" width="7.6" height="7.6" rx="1" fill="#4a7ee8"/><polyline points="1.52,3.80 3.19,5.47 6.08,2.13" fill="none" stroke="#fff" stroke-width="1"/></svg>
<span id="t101" class="t" style="left:443.40px;top:189.17px;font-size:13.2px;line-height:13.2px;color:#222;font-weight:normal;transform:scale(0.4922,0.5);transform-origin:0 0;">科目单据头</span>
<div class="r" style="left:477.40px;top:187.90px;width:6.00px;height:6.00px;border:0.8px solid #b8c0d0;border-radius:1px;background:#fff"></div>
<span id="t102" class="t" style="left:486.90px;top:189.17px;font-size:13.2px;line-height:13.2px;color:#222;font-weight:normal;transform:scale(0.5018,0.5);transform-origin:0 0;">核算维度</span>
<div class="r" style="left:515.00px;top:188.20px;width:5.80px;height:5.80px;border:0.8px solid #b8c0d0;border-radius:1px;background:#fff"></div>
<span id="t103" class="t" style="left:524.80px;top:189.17px;font-size:13.2px;line-height:13.2px;color:#222;font-weight:normal;transform:scale(0.5018,0.5);transform-origin:0 0;">分配信息</span>
<span id="t104" class="t" style="left:432.90px;top:209.97px;font-size:13.2px;line-height:13.2px;color:#222;font-weight:normal;transform:scale(0.5063,0.5);transform-origin:0 0;">新增行</span>
<span id="t105" class="t" style="left:460.10px;top:209.97px;font-size:13.2px;line-height:13.2px;color:#222;font-weight:normal;transform:scale(0.5063,0.5);transform-origin:0 0;">删除行</span>
<span id="t106" class="t" style="left:486.90px;top:209.97px;font-size:13.2px;line-height:13.2px;color:#222;font-weight:normal;transform:scale(0.5018,0.5);transform-origin:0 0;">全部删除</span>
<span id="t107" class="t" style="left:520.50px;top:209.97px;font-size:13.2px;line-height:13.2px;color:#222;font-weight:normal;transform:scale(0.5063,0.5);transform-origin:0 0;">插入行</span>
<span id="t108" class="t" style="left:548.40px;top:209.97px;font-size:13.2px;line-height:13.2px;color:#222;font-weight:normal;transform:scale(0.5063,0.5);transform-origin:0 0;">复制行</span>
<div class="r" style="left:429.30px;top:221.00px;width:275.70px;height:12.30px;background:#e6e9f0"></div>
<div class="r" style="left:429.30px;top:233.30px;width:8.10px;height:23.70px;background:#eef0f4"></div>
<div class="r" style="left:437.40px;top:233.30px;width:267.60px;height:12.40px;background:#edf1fb"></div>
<div class="r" style="left:579.30px;top:233.30px;width:63.30px;height:12.40px;background:#fff"></div>
<div class="r" style="left:437.40px;top:245.70px;width:267.60px;height:11.30px;background:#fff"></div>
<div class="r" style="left:429.30px;top:245.40px;width:275.70px;height:0.60px;background:#e3e6ec"></div>
<div class="r" style="left:429.30px;top:256.40px;width:275.70px;height:0.80px;background:#dfe2e8"></div>
<div class="r" style="left:437.10px;top:221.00px;width:0.60px;height:36.00px;background:#dde1e8"></div>
<div class="r" style="left:453.30px;top:221.00px;width:0.60px;height:36.00px;background:#dde1e8"></div>
<div class="r" style="left:526.10px;top:221.00px;width:0.60px;height:36.00px;background:#dde1e8"></div>
<div class="r" style="left:579.00px;top:221.00px;width:0.60px;height:36.00px;background:#dde1e8"></div>
<div class="r" style="left:642.30px;top:221.00px;width:0.60px;height:36.00px;background:#dde1e8"></div>
<div class="r" style="left:657.20px;top:221.00px;width:0.60px;height:36.00px;background:#dde1e8"></div>
<span id="t109" class="t" style="left:439.81px;top:224.22px;font-size:13.0px;line-height:13.0px;color:#333;font-weight:normal;transform:scale(0.5000,0.5);transform-origin:0 0;">(</span>
<span id="t110" class="t" style="left:454.80px;top:224.17px;font-size:13.2px;line-height:13.2px;color:#222;font-weight:normal;transform:scale(0.5152,0.5);transform-origin:0 0;">字段</span>
<span id="t111" class="t" style="left:528.40px;top:224.17px;font-size:13.2px;line-height:13.2px;color:#222;font-weight:normal;transform:scale(0.5152,0.5);transform-origin:0 0;">比较</span>
<span id="t112" class="t" style="left:581.20px;top:224.17px;font-size:13.2px;line-height:13.2px;color:#222;font-weight:normal;transform:scale(0.5418,0.5);transform-origin:0 0;">值</span>
<span id="t113" class="t" style="left:644.60px;top:224.22px;font-size:13.0px;line-height:13.0px;color:#333;font-weight:normal;transform:scale(0.5000,0.5);transform-origin:0 0;">)</span>
<span id="t114" class="t" style="left:659.80px;top:224.17px;font-size:13.2px;line-height:13.2px;color:#222;font-weight:normal;transform:scale(0.5152,0.5);transform-origin:0 0;">逻辑</span>
<svg class="r" style="left:432.4px;top:238.3px" width="2.6" height="5"><path d="M0.1,0.35 H2.5 M1.3,0.35 V4.65 M0.1,4.65 H2.5" stroke="#4a68b8" stroke-width="0.65"/></svg>
<span id="t115" class="t" style="left:455.20px;top:237.27px;font-size:13.2px;line-height:13.2px;color:#222;font-weight:normal;transform:scale(0.4909,0.5);transform-origin:0 0;">科目单据头-数据状态</span>
<span id="t116" class="t" style="left:528.40px;top:237.27px;font-size:13.2px;line-height:13.2px;color:#222;font-weight:normal;transform:scale(0.5063,0.5);transform-origin:0 0;">不等于</span>
<span id="t117" class="t" style="left:581.20px;top:237.27px;font-size:13.2px;line-height:13.2px;color:#222;font-weight:normal;transform:scale(0.5063,0.5);transform-origin:0 0;">已审核</span>
<svg class="r" style="left:635.40px;top:238.60px;overflow:visible" width="5.40" height="2.60"><polyline points="0,0 2.70,2.60 5.40,0" fill="none" stroke="#9aa3b5" stroke-width="0.8"/></svg>
<span id="t118" class="t" style="left:659.80px;top:237.27px;font-size:13.2px;line-height:13.2px;color:#222;font-weight:normal;transform:scale(0.5152,0.5);transform-origin:0 0;">并且</span>
<div class="r" style="left:429.10px;top:232.80px;width:270.30px;height:19.00px;border:1.7px solid #f22222;box-sizing:border-box"></div>
<span id="t119" class="t" style="left:460.40px;top:378.97px;font-size:13.2px;line-height:13.2px;color:#444;font-weight:normal;transform:scale(0.5018,0.5);transform-origin:0 0;">数据状态</span>
<div class="r" style="left:488.50px;top:376.60px;width:68.10px;height:11.00px;background:#fff;border:0.8px solid #bdc5dc;border-radius:1.5px;box-sizing:border-box"></div>
<span id="t120" class="t" style="left:490.00px;top:378.97px;font-size:13.2px;line-height:13.2px;color:#222;font-weight:normal;transform:scale(0.5152,0.5);transform-origin:0 0;">全部</span>
<svg class="r" style="left:549.00px;top:381.00px;overflow:visible" width="6.00" height="2.60"><polyline points="0,0 3.00,2.60 6.00,0" fill="none" stroke="#9aa3b5" stroke-width="0.8"/></svg>
<span id="t121" class="t" style="left:612.20px;top:378.97px;font-size:13.2px;line-height:13.2px;color:#444;font-weight:normal;transform:scale(0.5018,0.5);transform-origin:0 0;">禁用状态</span>
<div class="r" style="left:640.00px;top:376.60px;width:70.00px;height:11.00px;background:#fff;border:0.8px solid #bdc5dc;border-radius:1.5px;box-sizing:border-box"></div>
<span id="t122" class="t" style="left:641.60px;top:378.97px;font-size:13.2px;line-height:13.2px;color:#222;font-weight:normal;transform:scale(0.5152,0.5);transform-origin:0 0;">全部</span>
<div class="r" style="left:628.00px;top:396.00px;width:49.00px;height:11.60px;background:#5585ee;border-radius:1.5px"></div>
<span id="t123" class="t" style="left:645.80px;top:398.47px;font-size:13.2px;line-height:13.2px;color:#fff;font-weight:normal;transform:scale(0.5152,0.5);transform-origin:0 0;">确定</span>
<div class="r" style="left:679.00px;top:396.00px;width:41.00px;height:11.60px;background:#5585ee;border-radius:1.5px"></div>
<span id="t124" class="t" style="left:696.80px;top:398.47px;font-size:13.2px;line-height:13.2px;color:#fff;font-weight:normal;transform:scale(0.5152,0.5);transform-origin:0 0;">取消</span>
<span class="t" style="left:328.0px;top:196.0px;font-size:8.6px;line-height:10px;color:rgba(120,120,135,0.2);-webkit-text-stroke:0;transform:rotate(-22deg)">演示版</span>
<span class="t" style="left:485.0px;top:196.0px;font-size:8.6px;line-height:10px;color:rgba(120,120,135,0.2);-webkit-text-stroke:0;transform:rotate(-22deg)">演示版</span>
<span class="t" style="left:643.0px;top:196.0px;font-size:8.6px;line-height:10px;color:rgba(120,120,135,0.2);-webkit-text-stroke:0;transform:rotate(-22deg)">演示版</span>
<span class="t" style="left:328.0px;top:280.0px;font-size:8.6px;line-height:10px;color:rgba(120,120,135,0.2);-webkit-text-stroke:0;transform:rotate(-22deg)">演示版</span>
<span class="t" style="left:485.0px;top:280.0px;font-size:8.6px;line-height:10px;color:rgba(120,120,135,0.2);-webkit-text-stroke:0;transform:rotate(-22deg)">演示版</span>
<span class="t" style="left:643.0px;top:280.0px;font-size:8.6px;line-height:10px;color:rgba(120,120,135,0.2);-webkit-text-stroke:0;transform:rotate(-22deg)">演示版</span>
<span class="t" style="left:328.0px;top:364.0px;font-size:8.6px;line-height:10px;color:rgba(120,120,135,0.2);-webkit-text-stroke:0;transform:rotate(-22deg)">演示版</span>
<span class="t" style="left:485.0px;top:364.0px;font-size:8.6px;line-height:10px;color:rgba(120,120,135,0.2);-webkit-text-stroke:0;transform:rotate(-22deg)">演示版</span>
<span class="t" style="left:643.0px;top:364.0px;font-size:8.6px;line-height:10px;color:rgba(120,120,135,0.2);-webkit-text-stroke:0;transform:rotate(-22deg)">演示版</span>
<svg class="r" style="left:0;top:0" width="700" height="415"><polygon points="33.63,69.18 140.29,112.64 300.48,178.03 421.67,227.37 420.33,230.61 299.52,180.35 139.71,114.02 33.37,69.82" fill="#f52222"/><polygon points="430.3,233.1 419.3,234.0 423.4,225.0" fill="#f52222"/><rect x="7.6" y="44.0" width="30.8" height="14.2" fill="none" stroke="#ff1e1e" stroke-width="1.15"/></svg>
</div></body></html>
